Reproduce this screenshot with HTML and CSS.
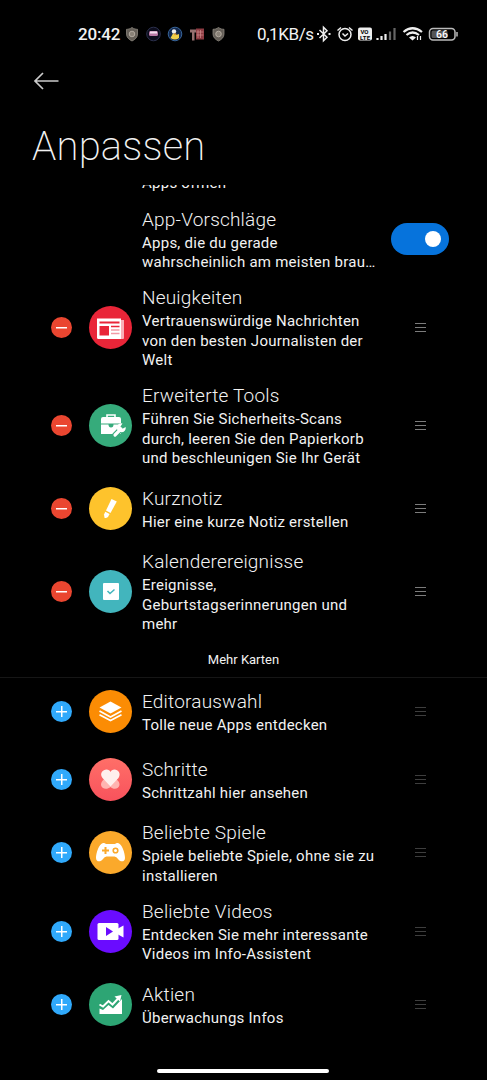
FILE: index.html
```html
<!DOCTYPE html>
<html lang="de">
<head>
    <meta charset="UTF-8">
    <meta name="viewport" content="width=device-width, initial-scale=1.0">
    <title>Anpassen</title>
    <link rel="stylesheet" href="styles.css">
</head>
<body>
    <!-- status bar -->
    <div class="statusbar">
        <span class="time">20:42</span>
        <svg class="notif" width="116" height="18" viewBox="0 0 116 18">
            <g id="shield">
                <path d="M7 2.500 C9 4 11 4.300 12.500 4.300 V9 C12.500 12.500 10 14.500 7 16 C4 14.500 1.500 12.500 1.500 9 V4.300 C3 4.300 5 4 7 2.500Z" fill="#655f58" stroke="#8c867d" stroke-width=".8"/>
                <circle cx="7" cy="9" r="2.800" fill="#8a8278" stroke="#c0b8ac" stroke-width=".8"/>
            </g>
            <circle cx="28.500" cy="9" r="6.800" fill="#0c0c1c" stroke="#2b304c"/>
            <rect x="24" y="6" width="9" height="5" rx="1.500" fill="#b778a4"/>
            <rect x="25" y="6.500" width="7" height="2" fill="#f2dfee"/>
            <circle cx="50" cy="9" r="6.800" fill="#12284e" stroke="#376397"/>
            <circle cx="49" cy="6.500" r="2.200" fill="#eee"/>
            <path d="M45.500 13 L48 8.500 L51 10 L54 9 L54 13 Q50 16 45.500 13Z" fill="#f0cf4a"/>
            <path d="M49 8 l3 1 -2 1.500z" fill="#f39a27"/>
            <path d="M65 4.500 h7 v3 h-2.500 v8 h-2.500 v-8 h-2z" fill="#957070"/>
            <rect x="71" y="3.500" width="8" height="11" fill="#8d3b42"/>
            <path d="M73 5v8M75.500 5v8M71.500 7h7M71.500 10h7" stroke="#d18d8d" stroke-width=".7"/>
            <use href="#shield" x="86.500"/>
        </svg>
        <span class="speed">0,1KB/s</span>
        <svg class="system" width="145" height="22" viewBox="0 0 145 22" fill="none" stroke="#eee" stroke-width="1.500">
            <path d="M3.500 7 L11 14.300 L7.500 17.800 V4.200 L11 7.700 L3.500 15"/>
            <path d="M1 11h2M12.500 11h2" stroke-width="2"/>
            <circle cx="29" cy="11.500" r="6"/>
            <path d="M26.500 10.500 L29 13 L32 10.500M21.500 7.500 L25 4.500M33 4.500 L36.500 7.500"/>
            <rect x="42" y="4.500" width="14" height="13" rx="2" fill="#eee" stroke="none"/>
            <path d="M61.500 17v-2M65.500 17v-4M69.500 17v-6" stroke-width="2.200"/>
            <path d="M74 17V8.500M78.500 17V5" stroke="#666" stroke-width="2.200"/>
            <path d="M87.500 9 Q96.500 1.500 106 9" stroke-width="2.200"/>
            <path d="M90.500 12 Q96.500 7 103 12" stroke-width="2.200"/>
            <path d="M93 14.500 Q96.500 11.500 100 14.500 L96.500 17.500Z" fill="#eee" stroke="none"/>
            <path d="M101.500 13v4M104.500 13v4" stroke-width="1.200"/>
            <rect x="113.500" y="5.500" width="25.500" height="11.500" rx="3.500" stroke="#bbb"/>
            <rect x="115.500" y="7.500" width="16" height="7.500" rx="1.500" fill="#555" stroke="none"/>
            <path d="M141 9v4.500" stroke="#bbb"/>
            <g class="tiny">
                <text x="44.500" y="10.500" fill="#000" font-size="6" textLength="8">VO</text>
                <text x="44" y="16.500" fill="#000" font-size="6" textLength="10">LTE</text>
                <text class="level" x="120" y="15" fill="#fff" font-size="10.500">66</text>
            </g>
        </svg>
    </div>

    <div class="header">
        <svg class="back" width="26" height="18" viewBox="0 0 26 18" fill="none" stroke="#ccc" stroke-width="1.700">
            <path d="M10 1 L2 9 L10 17M2 9 H25.500"/>
        </svg>
        <h1>Anpassen</h1>
    </div>

    <div class="list">
        <div class="cutoff"><p>Apps öffnen</p></div>

        <div class="row">
            <div class="text">
                <h2>App-Vorschläge</h2>
                <p>Apps, die du gerade<br>wahrscheinlich am meisten brau…</p>
            </div>
            <div class="toggle"></div>
        </div>

        <div class="row">
            <span class="btn remove"></span>
            <svg class="icon red" viewBox="0 0 43 43">
                <path d="M32 14 h3 v18 q0 1-1 1 h-3z" fill="#f9aeb8"/>
                <path d="M8 12.500 h24 v20.500 h-22.500 q-1.500 0-1.500-1.500z" fill="#fff"/>
                <path d="M10.500 15.500 h20 v2 h-20zM10.500 20 h9.500 v9.500 h-9.500z" fill="#e92538"/>
                <path d="M22 20.500 h8.500" stroke="#e92538" stroke-width="1.500"/>
                <path d="M22 24 h8.500M22 27.500 h8.500" stroke="#f29aa6" stroke-width="1.500"/>
            </svg>
            <div class="text">
                <h2>Neuigkeiten</h2>
                <p>Vertrauenswürdige Nachrichten<br>von den besten Journalisten der<br>Welt</p>
            </div>
            <span class="handle"></span>
        </div>

        <div class="row">
            <span class="btn remove"></span>
            <svg class="icon green" viewBox="0 0 43 43">
                <path d="M18 13 V11 h8 v2" fill="none" stroke="#fff" stroke-width="1.600"/>
                <path d="M14 13 h16 q2 0 2 2 v4.500 h-20 v-4.500 q0-2 2-2zM12 20.500 h7.500 q0 3 2.500 3 t2.500-3 h7.500 v9.500 h-20z" fill="#fff"/>
                <path d="M26 31 L32.500 24.500" stroke="#36ab7b" stroke-width="5.500" stroke-linecap="round"/>
                <circle cx="33" cy="24.500" r="5" fill="#36ab7b"/>
                <path d="M26 31 L32 25" stroke="#fff" stroke-width="3.200" stroke-linecap="round"/>
                <path d="M33.500 19.500 A4.500 4.500 0 1 0 36.700 23 L33 25 L31.500 22.500Z" fill="#fff"/>
            </svg>
            <div class="text">
                <h2>Erweiterte Tools</h2>
                <p>Führen Sie Sicherheits-Scans<br>durch, leeren Sie den Papierkorb<br>und beschleunigen Sie Ihr Gerät</p>
            </div>
            <span class="handle"></span>
        </div>

        <div class="row">
            <span class="btn remove"></span>
            <svg class="icon yellow" viewBox="0 0 43 43">
                <path d="M22.500 12 L27.800 14.500 L21.500 26 L17 23.500Z" fill="#fff"/>
                <path d="M16.300 24.800 L20.600 27 L19 30 Q17 31.500 15.500 30.800 L15 27.500Z" fill="#fff"/>
            </svg>
            <div class="text">
                <h2>Kurznotiz</h2>
                <p>Hier eine kurze Notiz erstellen</p>
            </div>
            <span class="handle"></span>
        </div>

        <div class="row">
            <span class="btn remove"></span>
            <svg class="icon teal" viewBox="0 0 43 43">
                <rect x="14" y="13" width="16" height="17" rx="1" fill="#fff"/>
                <path d="M18.500 21 L21 23.500 L25.500 19.500" fill="none" stroke="#42b5bd" stroke-width="1.500"/>
            </svg>
            <div class="text">
                <h2>Kalenderereignisse</h2>
                <p>Ereignisse,<br>Geburtstagserinnerungen und<br>mehr</p>
            </div>
            <span class="handle"></span>
        </div>

        <div class="divider">Mehr Karten</div>

        <div class="row more">
            <span class="btn add"></span>
            <svg class="icon orange" viewBox="0 0 43 43">
                <path d="M21.500 11.500 L32.500 17.500 L21.500 23.500 L10.500 17.500Z" fill="#fff"/>
                <path d="M10.500 21 L21.500 27 L32.500 21M10.500 24.800 L21.500 30.500 L32.500 24.800" fill="none" stroke="#fff" stroke-width="1.800"/>
            </svg>
            <div class="text">
                <h2>Editorauswahl</h2>
                <p>Tolle neue Apps entdecken</p>
            </div>
            <span class="handle"></span>
        </div>

        <div class="row more">
            <span class="btn add"></span>
            <svg class="icon coral" viewBox="0 0 43 43">
                <path d="M21 16 C25 20 31 22 30.500 27 C30 31 24.500 32 21.500 29 C18 32 12.500 31 12 27 C12 22 17 20 21 16Z" fill="#ffb4b1"/>
                <path d="M21.500 28.500 L13.500 20 C10 15.500 14 11.500 17.500 11.500 C19.500 11.500 21 12.500 21.500 14 C22 12.500 23.500 11.500 25.500 11.500 C29 11.500 32.500 15.500 29.500 20Z" fill="#ffefed"/>
            </svg>
            <div class="text">
                <h2>Schritte</h2>
                <p>Schrittzahl hier ansehen</p>
            </div>
            <span class="handle"></span>
        </div>

        <div class="row more">
            <span class="btn add"></span>
            <svg class="icon amber" viewBox="0 0 43 43">
                <path d="M14 12 Q15.500 11.500 17 13 H26 Q27.500 11.500 29 12 C33 13 36 22 36 27 C36 31 31.500 31.500 29 28 Q27.500 25.500 25.500 25.500 H17.500 Q15.500 25.500 14 28 C11.500 31.500 7 31 7 27 C7 22 10 13 14 12Z" fill="#fff"/>
                <path d="M16.500 16 v7M13 19.500 h7" stroke="#fba92b" stroke-width="2"/>
                <circle cx="26.500" cy="19.500" r="2.300" fill="none" stroke="#fba92b" stroke-width="1.600"/>
            </svg>
            <div class="text">
                <h2>Beliebte Spiele</h2>
                <p>Spiele beliebte Spiele, ohne sie zu<br>installieren</p>
            </div>
            <span class="handle"></span>
        </div>

        <div class="row more">
            <span class="btn add"></span>
            <svg class="icon purple" viewBox="0 0 43 43">
                <rect x="8.500" y="13" width="21" height="17" rx="1.500" fill="#fff"/>
                <path d="M29 18.500 L34.500 15.500 V27.500 L29 24.500Z" fill="#fff"/>
                <path d="M17 17 L24 21.500 L17 26Z" fill="#6a0cff"/>
            </svg>
            <div class="text">
                <h2>Beliebte Videos</h2>
                <p>Entdecken Sie mehr interessante<br>Videos im Info-Assistent</p>
            </div>
            <span class="handle"></span>
        </div>

        <div class="row more">
            <span class="btn add"></span>
            <svg class="icon stock" viewBox="0 0 43 43">
                <path d="M10.500 25.500 L14 27 L19.500 22 L24 25.500 L33 16 V31 H10.500Z" fill="#fff"/>
                <path d="M10.500 21.500 L14 23.500 L19.500 18 L23.500 21.500 L30 14.500" fill="none" stroke="#fff" stroke-width="2"/>
                <path d="M25.500 13.500 L32.500 12 L31 18.500Z" fill="#fff"/>
            </svg>
            <div class="text">
                <h2>Aktien</h2>
                <p>Überwachungs Infos</p>
            </div>
            <span class="handle"></span>
        </div>
    </div>

    <div class="homebar"></div>
</body>
</html>
```
FILE: styles.css
```css
body, html{
    margin: 0;
    height: 100%;
    background-color: #000;
}
body{
    display: flex;
    flex-direction: column;
    height: 1080px;
    overflow: hidden;
    color: #f2f2f2;
    font-family: Roboto, "Liberation Sans", sans-serif;
}
h1, h2, p{
    margin: 0;
    white-space: nowrap;
}
svg{
    display: block;
    flex: none;
}

/* status bar */
.statusbar{
    display: flex;
    align-items: center;
    box-sizing: border-box;
    height: 67px;
    padding-left: 78px;
    font-size: 17px;
}
.time{
    width: 47px;
    font-weight: 500;
    letter-spacing: -.2px;
}
.speed{
    width: 58px;
    margin-left: 16px;
    white-space: nowrap;
    letter-spacing: -.4px;
}
.system{
    margin-left: 1px;
}
.tiny{
    stroke: none;
    font-weight: 700;
}
.level{
    font-weight: 500;
}

/* title */
.header{
    box-sizing: border-box;
    height: 118px;
    padding: 5px 0 0 33px;
}
h1{
    margin: 33px 0 0 -1px;
    font-size: 40px;
    line-height: 48px;
    font-weight: 200;
    letter-spacing: .2px;
}

/* card list */
.list{
    height: 853.5px;
    overflow: hidden;
}
.cutoff{
    height: 15px;
    display: flex;
    align-items: flex-end;
    padding: 0 0 0 142px;
    overflow: hidden;
}
.cutoff p{
    margin-bottom: 7px;
}
.row{
    display: flex;
    align-items: center;
    box-sizing: border-box;
    min-height: 68px;
    padding: 6.75px 0 6.75px 51px;
}
.text{
    width: 249px;
    margin-left: 10px;
}
h2{
    font-size: 19px;
    font-weight: 350;
    line-height: 26px;
    letter-spacing: .2px;
}
p{
    font-size: 15px;
    line-height: 19.5px;
    letter-spacing: .25px;
}
.text p{
    padding-top: 1px;
    margin-bottom: -1px;
}
.row .text:first-child{
    margin-left: 91px;
}
.toggle{
    display: flex;
    justify-content: flex-end;
    align-items: center;
    box-sizing: border-box;
    width: 58px;
    height: 32px;
    padding-right: 8px;
    border-radius: 16px;
    background-color: #0673dc;
}
.toggle::after{
    content: "";
    width: 16px;
    height: 16px;
    border-radius: 50%;
    background-color: #fff;
}
.btn{
    width: 21px;
    height: 21px;
    border-radius: 50%;
    background-position: center;
    background-repeat: no-repeat;
}
.remove{
    background-color: #ea4630;
    background-image: linear-gradient(#fff, #fff);
    background-size: 11px 1.5px;
}
.add{
    background-color: #30a9fb;
    background-image: linear-gradient(#fff, #fff), linear-gradient(#fff, #fff);
    background-size: 11px 1.5px, 1.5px 11px;
}
.icon{
    width: 43px;
    height: 43px;
    margin-left: 17px;
    border-radius: 50%;
}
.red{ background-color: #e92538; }
.green{ background-color: #36ab7b; }
.yellow{ background-color: #fec32c; }
.teal{ background-color: #42b5bd; }
.orange{ background-color: #fb8c04; }
.coral{ background-image: linear-gradient(#ff6f68, #f8525c); }
.amber{ background-color: #fba92b; }
.purple{ background-color: #6a0cff; }
.stock{ background-color: #2da574; }

.handle{
    box-sizing: border-box;
    width: 11px;
    height: 9px;
    margin-left: 24px;
    border-top: 1px solid #7c7c7c;
    border-bottom: 1px solid #7c7c7c;
    background: linear-gradient(#7c7c7c, #7c7c7c) center / 100% 1px no-repeat;
}
.more .handle{
    opacity: .5;
}
.divider{
    box-sizing: border-box;
    height: 37px;
    border-bottom: 1px solid #161616;
    line-height: 37px;
    font-size: 13px;
    text-align: center;
}
.homebar{
    width: 172px;
    height: 4px;
    margin: 30px 0 0 157px;
    border-radius: 2px;
    background-color: #fff;
}
```
